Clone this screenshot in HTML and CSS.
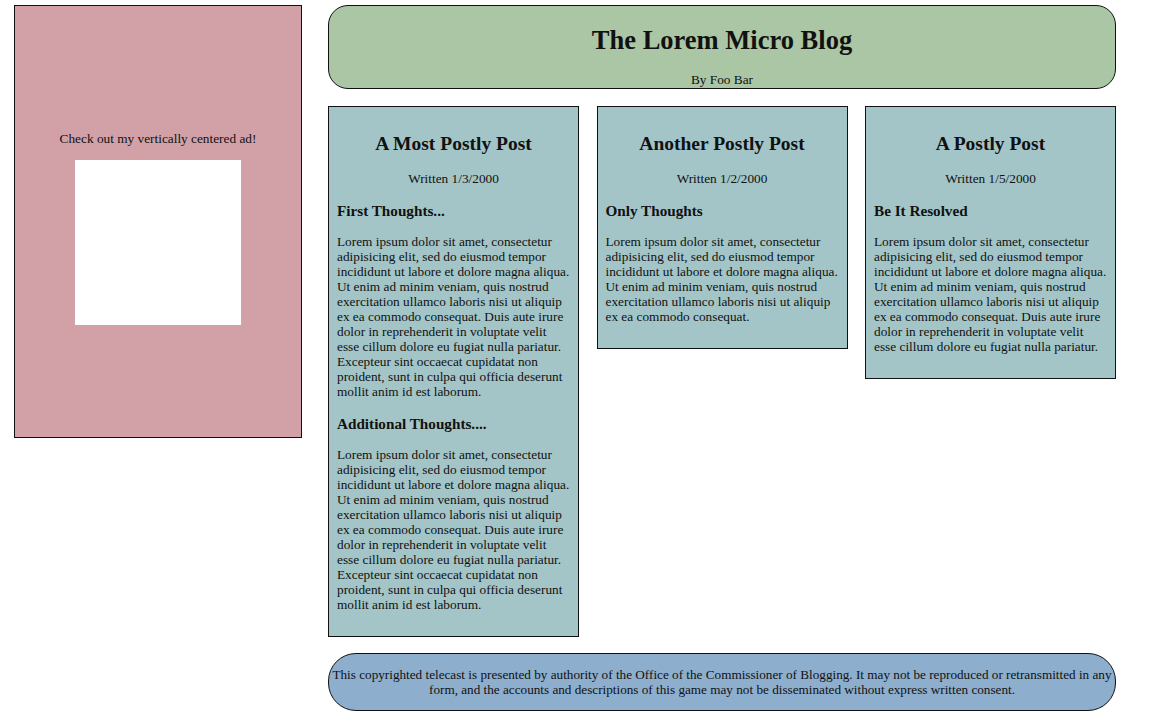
FILE: index.html
```html
<!DOCTYPE html>
<html>
<head>
<meta charset="utf-8">
<title>The Lorem Micro Blog</title>
<link rel="stylesheet" href="styles.css">
</head>
<body>
<div class="page">
  <aside class="ad">
    <p class="ad-text">Check out my vertically centered ad!</p>
    <div class="ad-image"></div>
  </aside>
  <div class="main">
    <header class="masthead">
      <h1 class="title">The Lorem Micro Blog</h1>
      <p class="byline">By Foo Bar</p>
    </header>
    <section class="posts">
      <article class="post">
        <h2 class="post-title">A Most Postly Post</h2>
        <p class="post-date">Written 1/3/2000</p>
        <h3 class="post-heading">First Thoughts...</h3>
        <p class="post-body">Lorem ipsum dolor sit amet, consectetur adipisicing elit, sed do eiusmod tempor incididunt ut labore et dolore magna aliqua. Ut enim ad minim veniam, quis nostrud exercitation ullamco laboris nisi ut aliquip ex ea commodo consequat. Duis aute irure dolor in reprehenderit in voluptate velit esse cillum dolore eu fugiat nulla pariatur. Excepteur sint occaecat cupidatat non proident, sunt in culpa qui officia deserunt mollit anim id est laborum.</p>
        <h3 class="post-heading">Additional Thoughts....</h3>
        <p class="post-body">Lorem ipsum dolor sit amet, consectetur adipisicing elit, sed do eiusmod tempor incididunt ut labore et dolore magna aliqua. Ut enim ad minim veniam, quis nostrud exercitation ullamco laboris nisi ut aliquip ex ea commodo consequat. Duis aute irure dolor in reprehenderit in voluptate velit esse cillum dolore eu fugiat nulla pariatur. Excepteur sint occaecat cupidatat non proident, sunt in culpa qui officia deserunt mollit anim id est laborum.</p>
      </article>
      <article class="post">
        <h2 class="post-title">Another Postly Post</h2>
        <p class="post-date">Written 1/2/2000</p>
        <h3 class="post-heading">Only Thoughts</h3>
        <p class="post-body">Lorem ipsum dolor sit amet, consectetur adipisicing elit, sed do eiusmod tempor incididunt ut labore et dolore magna aliqua. Ut enim ad minim veniam, quis nostrud exercitation ullamco laboris nisi ut aliquip ex ea commodo consequat.</p>
      </article>
      <article class="post">
        <h2 class="post-title">A Postly Post</h2>
        <p class="post-date">Written 1/5/2000</p>
        <h3 class="post-heading">Be It Resolved</h3>
        <p class="post-body">Lorem ipsum dolor sit amet, consectetur adipisicing elit, sed do eiusmod tempor incididunt ut labore et dolore magna aliqua. Ut enim ad minim veniam, quis nostrud exercitation ullamco laboris nisi ut aliquip ex ea commodo consequat. Duis aute irure dolor in reprehenderit in voluptate velit esse cillum dolore eu fugiat nulla pariatur.</p>
      </article>
    </section>
    <footer class="footer">
      <p class="footer-text">This copyrighted telecast is presented by authority of the Office of the Commissioner of Blogging. It may not be reproduced or retransmitted in any form, and the accounts and descriptions of this game may not be disseminated without express written consent.</p>
    </footer>
  </div>
</div>
</body>
</html>
```

FILE: styles.css
```css
html, body {
  margin: 0;
  padding: 0;
  background: #ffffff;
}

body {
  font-family: "Liberation Serif", "Times New Roman", serif;
  font-size: 13.3px;
  line-height: 15px;
  color: #111;
}

.page {
  display: grid;
  grid-template-columns: 288px 788px;
  column-gap: 26px;
  align-items: start;
  padding: 5px 0 0 14px;
}

.ad {
  box-sizing: border-box;
  height: 433px;
  background: #d2a1a8;
  border: 1px solid #111;
  display: flex;
  flex-direction: column;
  align-items: center;
  justify-content: center;
  padding-top: 13px;
}

.ad-text {
  margin: 0 0 14px;
}

.ad-image {
  width: 166px;
  height: 165px;
  background: #ffffff;
}

.main {
  display: flex;
  flex-direction: column;
  gap: 16px;
}

.masthead {
  box-sizing: border-box;
  height: 84px;
  background: #aac6a4;
  border: 1px solid #111;
  border-radius: 20px;
  text-align: center;
  padding-top: 19px;
}

.title {
  margin: 0 0 17px;
  font-size: 26.5px;
  line-height: 30px;
  font-weight: bold;
}

.byline {
  margin: 0;
}

.posts {
  display: flex;
  gap: 17.5px;
  align-items: flex-start;
  margin-top: 1px;
}

.post {
  flex: 1;
  box-sizing: border-box;
  background: #a3c5c7;
  border: 1px solid #111;
  padding: 8px 8px 8px;
}

.post-title {
  margin: 18px 0 16px;
  font-size: 19.5px;
  line-height: 22px;
  text-align: center;
}

.post-date {
  margin: 16px 0;
  text-align: center;
}

.post-heading {
  margin: 16px 0 15px;
  font-size: 15.2px;
  line-height: 17px;
}

.post-body {
  margin: 15px 0 16px;
}

.footer {
  box-sizing: border-box;
  height: 58px;
  background: #8eaecd;
  border: 1px solid #111;
  border-radius: 28px;
  padding: 13px 0 0;
  text-align: center;
}

.footer-text {
  margin: 0;
  font-size: 13.2px;
}
```
